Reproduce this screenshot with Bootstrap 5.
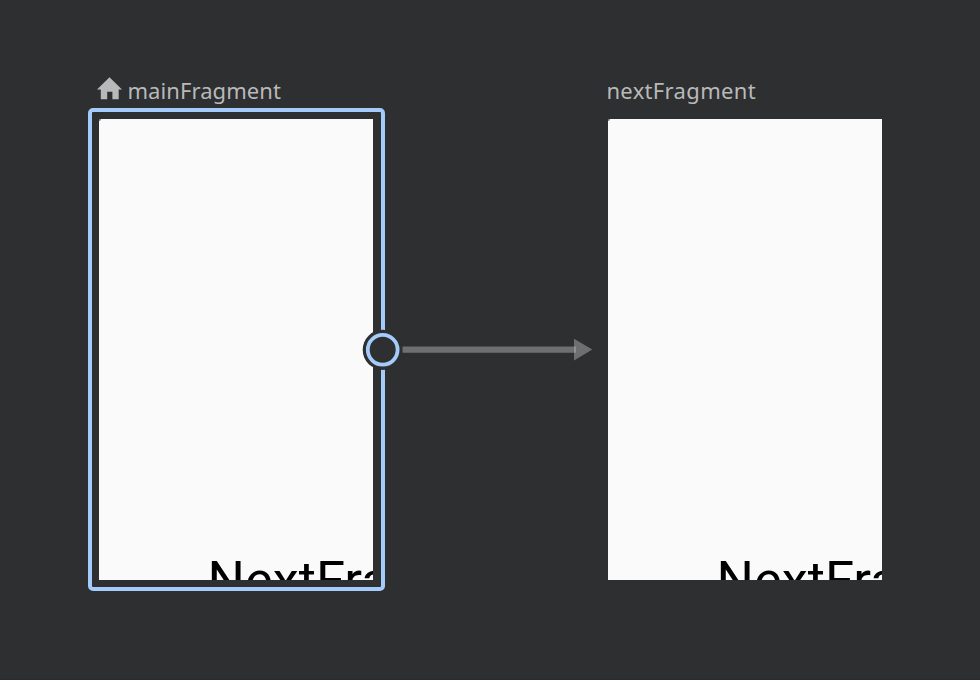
<!DOCTYPE html>
<html lang="en">
<head>
<meta charset="utf-8">
<meta name="viewport" content="width=device-width, initial-scale=1">
<title>Navigation graph</title>
<link rel="stylesheet" href="https://cdn.jsdelivr.net/npm/bootstrap@5.3.0/dist/css/bootstrap.min.css">
<style>
body { background: #2d2f31; }
.graph { width: 980px; height: 680px; border-bottom: 1px solid #2b292a; }
.node-main { left: 88px; top: 74px; width: 297px; }
.node-next { left: 607px; top: 74px; width: 276px; }
.node-label { height: 34px; color: #b9b9b9; font: 22px/32px "Noto Sans", sans-serif; white-space: nowrap; }
.node-main .node-label { padding-left: 8px; }
.node-main .node-name { margin-left: -.6px; letter-spacing: .08px; }
.node-next .node-name { margin-left: -.6px; letter-spacing: .33px; }
.selection { height: 483px; border: 4px solid #a4cbfa; border-radius: 5px; padding: 7px; }
.node-next .screen { margin: 11px 0 0 1px; }
.screen { width: 274px; height: 461px; background: #fafafa; }
.screen::before { content: ""; position: absolute; left: 0; top: 0; width: 2px; height: 2px; background: #77797a; border-bottom-right-radius: 2px; }
.screen-text { left: 108.5px; top: 431px; color: #000; font: 52.5px/60px Roboto, sans-serif; white-space: nowrap; }
</style>
</head>
<body>
<main class="graph position-relative overflow-hidden">
  <section class="node-main position-absolute">
    <div class="node-label d-flex">
      <svg class="flex-shrink-0" width="32" height="34" viewBox="0 0 32 34" aria-hidden="true"><path fill="#b9b9b9" d="M13.5 3.3 26 15.5H22.7V25.2H16.4V17.8H11.2V25.2H4.8V15.5H1Z"/></svg>
      <span class="node-name">mainFragment</span>
    </div>
    <div class="selection">
      <div class="screen position-relative overflow-hidden"><span class="screen-text position-absolute">NextFra</span></div>
    </div>
  </section>
  <section class="node-next position-absolute">
    <div class="node-label d-flex"><span class="node-name">nextFragment</span></div>
    <div class="screen position-relative overflow-hidden"><span class="screen-text position-absolute">NextFra</span></div>
  </section>
  <svg class="position-absolute top-0 start-0" width="980" height="680" aria-hidden="true">
    <path fill="#2d2f31" d="M379 330h8v39.5h-8z"/>
    <circle cx="382.7" cy="349.8" r="20" fill="#2d2f31"/>
    <circle cx="382.7" cy="349.8" r="14.9" fill="#2d2f31" stroke="#a4cbfa" stroke-width="3.8"/>
    <path fill="#b9b9b9" fill-opacity=".47" d="M402.5 346.4H576V352.8H402.5Z"/>
    <path fill="#b9b9b9" fill-opacity=".47" d="M574 338.8 592.3 349.6 574 360.5Z"/>
  </svg>
</main>
<script src="https://cdn.jsdelivr.net/npm/bootstrap@5.3.0/dist/js/bootstrap.bundle.min.js"></script>
</body>
</html>
